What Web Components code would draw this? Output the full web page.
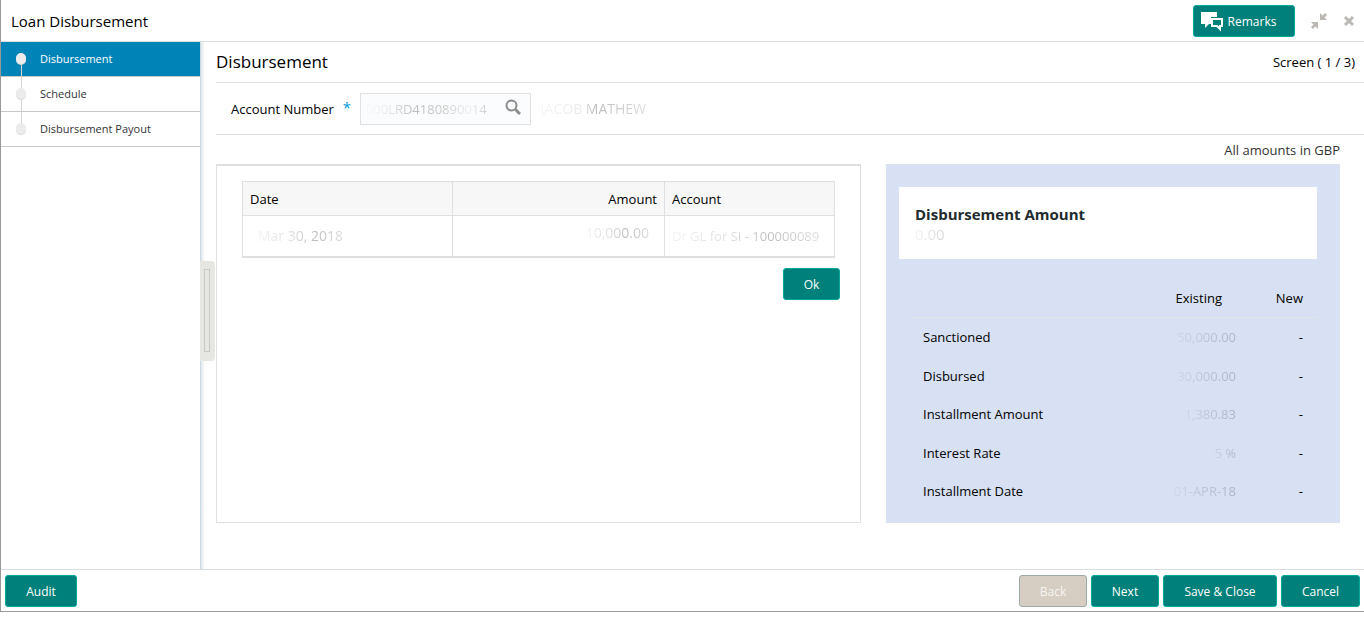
<!DOCTYPE html>
<html lang="en">
<head>
<meta charset="utf-8">
<title>Loan Disbursement</title>
<style>
body{margin:0;background:#fff;color:#000;font-family:"Open Sans","Noto Sans",sans-serif;font-size:13px;line-height:20px}
</style>
</head>
<body>
<loan-screen></loan-screen>
<script>
const define=(name,html)=>{
  const t=document.createElement('template');
  t.innerHTML=html;
  customElements.define(name,class extends HTMLElement{
    constructor(){super();this.attachShadow({mode:'open'}).append(t.content.cloneNode(true));}
    connectedCallback(){
      const b=this.shadowRoot.querySelector('button');
      if(b&&this.hasAttribute('disabled'))b.disabled=true;
    }
  });
};

define('action-button',`<style>
:host{display:block}
button{box-sizing:border-box;height:32px;width:100%;padding:2px 0 0;display:flex;align-items:center;justify-content:center;gap:4px;
 border:1px solid #00a99a;border-radius:3px;background:#00807a;color:#fff;font:inherit;font-size:12px;line-height:20px;white-space:nowrap}
button:disabled{background:#d6cec3;border-color:#9caaa8;color:#f6f3ef}
</style><button type="button"><slot></slot></button>`);

define('title-bar',`<style>
:host{display:flex;align-items:center;box-sizing:border-box;height:42px;padding:0 9px 0 10px;border-bottom:1px solid #d9dfe0}
h1{flex:1;margin:0;font-size:15px;font-weight:400}
action-button{width:102px;margin-right:16px}
.icon{padding:0;border:0;background:none;color:#bcb8b4;display:block}
.shrink{margin-right:16px}
svg{display:block}
action-button svg{margin-left:-12px}
</style>
<h1>Loan Disbursement</h1>
<action-button><svg width="24" height="20" viewBox="0 0 24 20"><path fill="#fff" d="M1 0h16v5h-6v7H9l-4 4v-4H1z"/><path fill="none" stroke="#fff" stroke-width="2" d="M12 7h10v7h-2v3l-3-3h-5z"/></svg><span>Remarks</span></action-button>
<button class="icon shrink" type="button" aria-label="Restore"><svg width="16" height="16" viewBox="0 0 16 16" fill="currentColor"><path d="M0 9h7v7l-2.500-2.500L2 16 0 14l2.500-2.500zM16 2l-2.500 2.500L16 7H9V0l2.500 2.500L14 0z"/></svg></button>
<button class="icon" type="button" aria-label="Close"><svg width="12" height="12" viewBox="0 0 12 12" stroke="currentColor" stroke-width="3"><path d="M2 2l8 8M10 2l-8 8"/></svg></button>`);

define('step-item',`<style>
:host{display:block;border-bottom:1px solid #c9c7c4;color:#333}
a{display:flex;align-items:center;height:34px;color:inherit;text-decoration:none;font-size:11px}
.rail{width:10px;height:34px;margin:0 14px 0 15px;display:flex;flex-direction:column;align-items:center}
.rail::before,.rail::after{content:"";width:1px;background:#d4d4d4;flex:1}
.dot{width:10px;height:11px;border-radius:5px;background:#ececec;box-shadow:0 1px #d8d8d8;margin-top:-2px}
:host([current]){background:#0084b8;color:#fff}
:host([current]) .rail::before,:host([last]) .rail::after{background:none}
</style><a href="#"><span class="rail"><span class="dot"></span></span><slot></slot></a>`);

define('step-list',`<style>
:host{display:block;width:199px;flex:none}
</style><nav><slot></slot></nav>`);

define('split-handle',`<style>
:host{display:flex;align-items:center;width:15px;flex:none;box-sizing:border-box;padding-top:10px;background:linear-gradient(90deg,#c8dcea 1px,#e4e6e8 1px,#fff 5px)}
button{width:15px;height:100px;padding:0 6px 0 4px;border:0;border-radius:0 4px 4px 0;background:#e6e6e2}
span{display:block;box-sizing:border-box;width:6px;height:83px;border:1px solid #c9c9c7}
</style><button type="button" aria-label="Resize panel"><span></span></button>`);

define('screen-heading',`<style>
:host{display:flex;align-items:center;justify-content:space-between;height:40px;padding-right:9px;border-bottom:1px solid #e0e0e0}
h2{margin:0;font-size:17px;font-weight:400;line-height:24px}
span{font-size:13px}
</style><h2>Disbursement</h2><span>Screen ( 1 / 3)</span>`);

define('account-field',`<style>
:host{display:flex;align-items:center;height:51px;padding-left:15px;border-bottom:1px solid #e0e0e0}
label{font-size:13px}
sup{width:8px;height:24px;color:#0099d8;margin:0 9px;font-size:15px;line-height:20px;vertical-align:top}
.box{display:flex;align-items:center;box-sizing:border-box;width:171px;height:32px;border:1px solid #dfe1e3;background:#fbfcfd}
input{flex:1;min-width:0;height:28px;padding:0 0 0 5px;border:0;outline:0;font:inherit;color:transparent;
 background:linear-gradient(90deg,#f4f4f4 10%,#e4e4e4 22%,#bbb 38%,#c8c8c8 60%,#eee 80%,#c8c8c8 95%);-webkit-background-clip:text;background-clip:text}
button{padding:0;border:0;background:none;margin:0 9px 3px 8px}
svg{display:block}
output{margin-left:10px;font-size:14px;color:transparent;background:linear-gradient(90deg,#f6f6f6,#e8e8e8 40%,#bbb 50%,#ddd);-webkit-background-clip:text;background-clip:text}
</style>
<label for="acc">Account Number</label><sup>*</sup>
<div class="box"><input id="acc" value="000LRD4180890014"><button type="button" aria-label="Search"><svg width="16" height="16" viewBox="0 0 16 16" fill="none" stroke="#8c8c8c"><circle cx="6.500" cy="6.500" r="5" stroke-width="2"/><path stroke-width="3" d="M10.500 10.500l4.500 4.500"/></svg></button></div>
<output>JACOB MATHEW</output>`);

define('disbursement-schedule',`<style>
:host{display:block;box-sizing:border-box;padding:15px 20px 20px 25px;border:1px solid #dfdfdf;border-top-width:2px}
table{width:calc(100% - 5px);border-collapse:collapse;table-layout:fixed;border:1px solid #dfdfdf;border-bottom-width:2px}
th,td{box-sizing:border-box;padding:0 7px;border:1px solid #dfdfdf;font-weight:400;text-align:left;white-space:nowrap}
th{height:34px;background:#f7f7f7}
td{height:41px;border-bottom-width:2px}
.date{width:210px}.amount{width:212px}
th.amount,td.amount{text-align:right}
td.date{padding-left:15px;font-size:14px}
td.amount{padding:0 15px 6px 0;font-size:14px}
td span{color:transparent;background:linear-gradient(90deg,#f4f4f4,#ddd 40%,#bbb 65%,#ddd);-webkit-background-clip:text;background-clip:text}
action-button{width:57px;margin:10px 0 0 auto}
</style>
<table><thead><tr><th class="date">Date</th><th class="amount">Amount</th><th>Account</th></tr></thead>
<tbody><tr><td class="date"><span>Mar 30, 2018</span></td><td class="amount"><span>10,000.00</span></td><td><span>Dr GL for SI - 100000089</span></td></tr></tbody></table>
<action-button>Ok</action-button>`);

define('loan-summary',`<style>
:host{display:block;box-sizing:border-box;padding:22px 22px 11px 12px;border:1px solid #dce2ec;background:#d8e0f3}
.card{box-sizing:border-box;height:72px;padding:17px 16px 0;background:#fff}
h3{margin:0;font-size:15px;font-weight:700;color:#222b2e}
.card span{display:block;width:32px;font-size:15px;color:transparent;background:linear-gradient(90deg,#f4f4f4,#d4d4d4);-webkit-background-clip:text;background-clip:text}
.grid{padding:19px 0 0 10px}
table{width:100%;border-collapse:separate;border-spacing:0}
th,td{box-sizing:border-box;padding:0 14px;font-weight:400;text-align:right}
thead th{height:40px;border-bottom:1px solid #e2e4e8}
.old{width:81px}.new{width:81px}
tbody th{height:38px;text-align:left}
tbody tr:nth-child(even) th{height:39px}
td.old{padding-right:0}
td.old span{color:transparent;background:linear-gradient(90deg,#ced5e8,#abb2c4);-webkit-background-clip:text;background-clip:text}
tbody tr:last-child>*{border-bottom:1px solid #dbe1ef}
</style>
<section class="card"><h3>Disbursement Amount</h3><span>0.00</span></section>
<div class="grid"><table><thead><tr><th></th><th class="old">Existing</th><th class="new">New</th></tr></thead><tbody>
<tr><th>Sanctioned</th><td class="old"><span>50,000.00</span></td><td>-</td></tr>
<tr><th>Disbursed</th><td class="old"><span>30,000.00</span></td><td>-</td></tr>
<tr><th>Installment Amount</th><td class="old"><span>1,380.83</span></td><td>-</td></tr>
<tr><th>Interest Rate</th><td class="old"><span>5 %</span></td><td>-</td></tr>
<tr><th>Installment Date</th><td class="old"><span>01-APR-18</span></td><td>-</td></tr>
</tbody></table></div>`);

define('footer-bar',`<style>
:host{display:flex;gap:4px;padding:5px 4px;height:31px;border-top:1px solid #d9dfe0}
.audit{width:72px;margin-right:auto}.short{width:68px}.save{width:114px}.cancel{width:79px}
</style>
<action-button class="audit">Audit</action-button><action-button class="short" disabled>Back</action-button>
<action-button class="short">Next</action-button><action-button class="save">Save &amp; Close</action-button><action-button class="cancel">Cancel</action-button>`);

define('loan-screen',`<style>
:host{display:flex;flex-direction:column;box-sizing:border-box;min-height:calc(100vh - 5px);border-left:1px solid #999;border-bottom:1px solid #999}
.body{flex:1;display:flex}
main{flex:1;min-width:0;display:flex;flex-direction:column;padding-left:1px}
.note{margin:0;padding:5px 24px 4px 0;text-align:right;color:#333}
.panels{flex:1;display:grid;grid-template-columns:minmax(0,1fr) 454px;gap:25px;padding:0 24px 46px 0}
</style>
<title-bar></title-bar>
<div class="body">
<step-list><step-item current>Disbursement</step-item><step-item>Schedule</step-item><step-item last>Disbursement Payout</step-item></step-list>
<split-handle></split-handle>
<main><screen-heading></screen-heading><account-field></account-field>
<p class="note">All amounts in GBP</p>
<div class="panels"><disbursement-schedule></disbursement-schedule><loan-summary></loan-summary></div></main>
</div>
<footer-bar></footer-bar>`);
</script>
</body>
</html>
